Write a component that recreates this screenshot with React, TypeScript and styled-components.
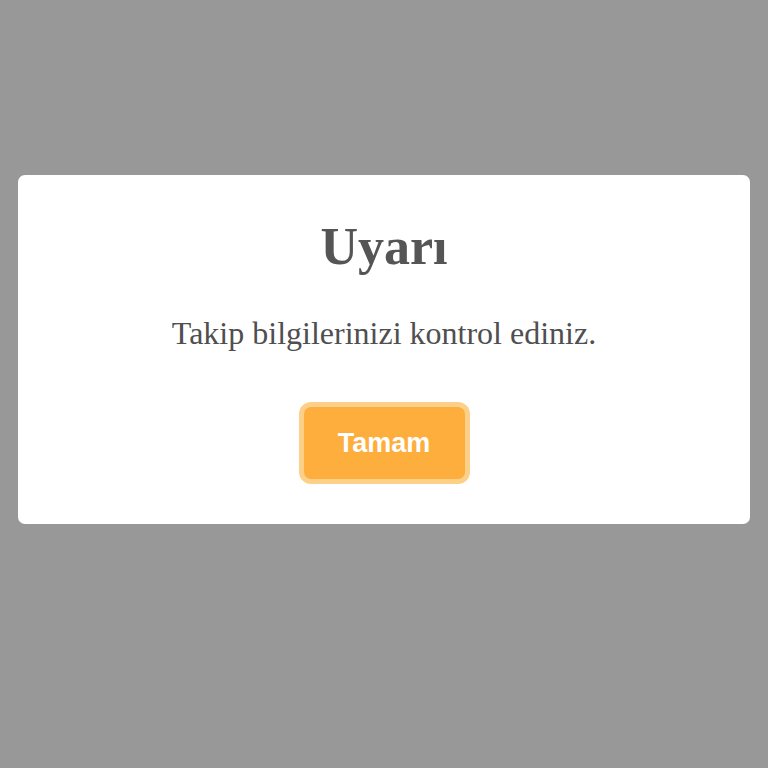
import React from 'react';
import styled, { createGlobalStyle } from 'styled-components';

const GlobalStyle = createGlobalStyle`
  html, body {
    margin: 0;
    padding: 0;
    background: #989898;
  }
`;

const Backdrop = styled.div`
  box-sizing: border-box;
  min-height: 768px;
  padding: 175px 18px 0;
  background: #989898;
`;

const Card = styled.div`
  background: #ffffff;
  border-radius: 7px;
  padding: 42px 20px 45px;
  display: flex;
  flex-direction: column;
  align-items: center;
`;

const Title = styled.h1`
  margin: 0;
  font-family: 'Liberation Serif', 'Times New Roman', serif;
  font-weight: bold;
  font-size: 52px;
  line-height: 60px;
  color: #555555;
`;

const Message = styled.p`
  margin: 36px 0 0;
  font-family: 'Liberation Serif', 'Times New Roman', serif;
  font-size: 32px;
  line-height: 40px;
  color: #4f4f4f;
`;

const OkButton = styled.button`
  margin-top: 54px;
  width: 161px;
  height: 72px;
  border: none;
  border-radius: 7px;
  background: #fdae3d;
  box-shadow: 0 0 0 5px #fdd08a;
  color: #ffffff;
  font-family: 'Liberation Sans', Arial, sans-serif;
  font-weight: bold;
  font-size: 27px;
  cursor: pointer;
`;

export default function App() {
  return (
    <>
      <GlobalStyle />
      <Backdrop>
        <Card>
          <Title>Uyarı</Title>
          <Message>Takip bilgilerinizi kontrol ediniz.</Message>
          <OkButton>Tamam</OkButton>
        </Card>
      </Backdrop>
    </>
  );
}
